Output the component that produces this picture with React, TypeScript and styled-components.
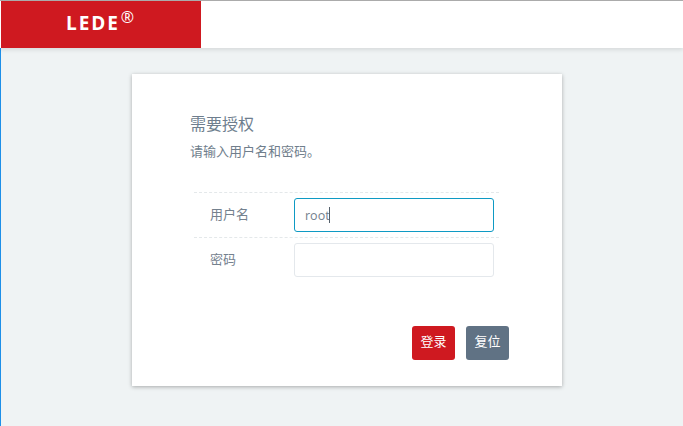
import React from "react";
import styled, { createGlobalStyle } from "styled-components";

const Global = createGlobalStyle`
  html, body { margin: 0; padding: 0; height: 100%; }
  body { font-family: "Open Sans", "Noto Sans CJK SC", sans-serif; background: #eff3f4; overflow: hidden; }
  * { box-sizing: border-box; }
`;

const Page = styled.div`
  width: 683px;
  height: 426px;
  display: flex;
  flex-direction: column;
  border-top: 1px solid #ababab;
  background: #eff3f4;
  overflow: hidden;
`;

const Header = styled.header`
  height: 47px;
  flex: none;
  display: flex;
  background: #fff;
  padding-left: 1px;
  box-shadow: 0 2px 4px rgba(0, 0, 0, 0.1);
  position: relative;
`;

const Logo = styled.div`
  width: 200px;
  display: flex;
  align-items: flex-start;
  padding: 7px 0 0 65px;
  background: #cf1920;
  color: #fff;
  font-weight: 700;
  font-size: 19px;
  line-height: 30px;
  letter-spacing: 1.9px;
`;

const Reg = styled.span`
  font-size: 16px;
  line-height: 16px;
  font-weight: 400;
  letter-spacing: 0;
  margin: 1px 0 0 1px;
`;

const Main = styled.main`
  flex: 1;
  border-left: 1px solid #1d8fe8;
  padding: 26px 0 0 131px;
`;

const Card = styled.form`
  width: 430px;
  height: 312px;
  background: #fff;
  box-shadow: 0 1px 4px rgba(0, 0, 0, 0.3);
  padding: 39px 53px 0 58px;
  display: flex;
  flex-direction: column;
`;

const Title = styled.h2`
  margin: 0;
  font-size: 16px;
  font-weight: 400;
  line-height: 22px;
  color: #6e7e8e;
`;

const Description = styled.p`
  margin: 7px 0 0;
  font-size: 13px;
  line-height: 18px;
  color: #707e8c;
`;

const Fields = styled.div`
  width: 305px;
  margin: 32px 0 0 4px;
  display: flex;
  flex-direction: column;
`;

const Row = styled.div`
  height: 45px;
  padding: 5px 5px 0 16px;
  display: flex;
  align-items: flex-start;
  border-top: 1px dashed #e4e8ea;
`;

const Label = styled.label`
  width: 84px;
  flex: none;
  font-size: 13px;
  line-height: 33px;
  color: #74818e;
`;

const InputWrap = styled.div`
  position: relative;
  width: 200px;
  height: 34px;
`;

const Input = styled.input<{ $active?: boolean }>`
  width: 100%;
  height: 100%;
  padding: 0 10px;
  border: 1px solid ${(p) => (p.$active ? "#0e9ac4" : "#e4e8ec")};
  border-radius: 3px;
  outline: none;
  background: #fff;
  color: #74818e;
  font-family: "Open Sans", "Noto Sans CJK SC", sans-serif;
  font-size: 12.5px;
`;

const Caret = styled.span`
  position: absolute;
  left: 35px;
  top: 9px;
  width: 1px;
  height: 16px;
  background: #55606b;
`;

const Actions = styled.div`
  margin-top: 44px;
  display: flex;
  justify-content: flex-end;
  gap: 11px;
`;

const Button = styled.button<{ $bg: string }>`
  width: 43px;
  height: 34px;
  padding: 0 0 5px;
  border: none;
  border-radius: 3px;
  background: ${(p) => p.$bg};
  color: #fff;
  font-family: "Noto Sans CJK SC", sans-serif;
  font-size: 13px;
`;

export default function App() {
  return (
    <>
      <Global />
      <Page>
        <Header>
          <Logo>
            LEDE<Reg>®</Reg>
          </Logo>
        </Header>
        <Main>
          <Card onSubmit={(e) => e.preventDefault()}>
            <Title>需要授权</Title>
            <Description>请输入用户名和密码。</Description>
            <Fields>
              <Row>
                <Label>用户名</Label>
                <InputWrap>
                  <Input $active defaultValue="root" />
                  <Caret />
                </InputWrap>
              </Row>
              <Row>
                <Label>密码</Label>
                <InputWrap>
                  <Input type="password" />
                </InputWrap>
              </Row>
            </Fields>
            <Actions>
              <Button $bg="#cf1920">登录</Button>
              <Button $bg="#607284">复位</Button>
            </Actions>
          </Card>
        </Main>
      </Page>
    </>
  );
}
